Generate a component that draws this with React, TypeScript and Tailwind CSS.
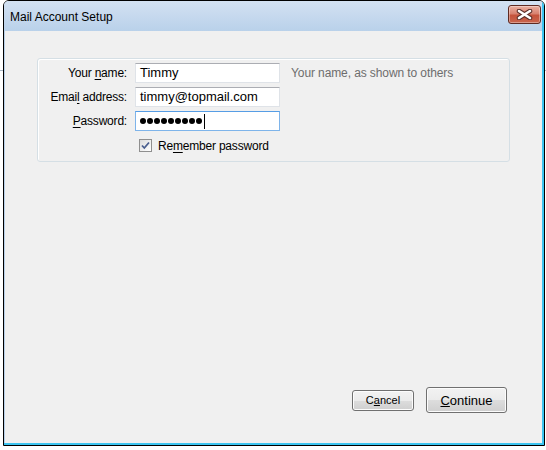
import React from "react";

const font = { fontFamily: '"Liberation Sans", Arial, sans-serif' };

function Field({ children, focused }: { children: React.ReactNode; focused?: boolean }) {
  return (
    <div
      className={
        "h-[20px] w-[145px] flex items-center pl-[4px] bg-white border text-[13px] text-black " +
        (focused
          ? "border-[#7eb4ea] border-t-[#569de5]"
          : "border-[#dfe3e8] border-t-[#abadb3]")
      }
    >
      {children}
    </div>
  );
}

function Label({ pre, u, post }: { pre: string; u: string; post: string }) {
  return (
    <div className="text-right text-[12px] tracking-[-0.2px] text-black leading-none">
      {pre}
      <span className="underline underline-offset-2">{u}</span>
      {post}
    </div>
  );
}

export default function App() {
  return (
    <div className="w-[546px] h-[450px] bg-white flex" style={font}>
      <div className="w-[3px] shrink-0">
        <div className="mt-[70px] h-px bg-[#a8b8c8]" />
      </div>
      <div className="w-[542px] h-[446px] border border-black rounded-t-[6px] overflow-hidden shrink-0">
        <div className="h-full flex flex-col border-r-2 border-b-2 border-[#3cc4f0] bg-[#b9d1ea]">
          <div className="h-[30px] flex justify-between bg-gradient-to-b from-[#d3e1f2] to-[#b9d1ea] pl-[6px] pr-px">
            <div className="self-center pt-[1px] text-[12px] text-black">Mail Account Setup</div>
            <div className="mt-[4px] w-[33px] h-[19px] rounded-[3px] border border-[#5e2a22] bg-[linear-gradient(to_bottom,#eab0a2_0%,#d88270_45%,#c5533c_55%,#c9664e_100%)] shadow-[inset_0_0_0_1px_rgba(255,255,255,0.35)] flex items-center justify-center">
              <svg width="17" height="11" viewBox="0 0 17 11">
                <path d="M3 2 L14 9 M14 2 L3 9" stroke="#5a2f2a" strokeWidth="4.5" strokeLinecap="round" />
                <path d="M3 2 L14 9 M14 2 L3 9" stroke="#ffffff" strokeWidth="2.6" strokeLinecap="round" />
              </svg>
            </div>
          </div>
          <div className="flex-1 ml-px flex flex-col bg-[#f0f0f0]">
            <div className="mt-[27px] mx-[32px] h-[104px] border border-[#d5dfe5] rounded-[3px] shadow-[inset_1px_1px_0_#ffffff] pt-[4px]">
              <div className="grid grid-cols-[89px_145px_1fr] gap-x-[8px] gap-y-[4px] items-center">
                <Label pre="Your " u="n" post="ame:" />
                <Field>Timmy</Field>
                <div className="pl-[3px] text-[12px] tracking-[-0.1px] text-[#6d6d6d] leading-none">Your name, as shown to others</div>

                <Label pre="Emai" u="l" post=" address:" />
                <Field>timmy@topmail.com</Field>
                <div />

                <Label pre="" u="P" post="assword:" />
                <Field focused>
                  <div className="flex items-center">
                    {Array.from({ length: 9 }).map((_, i) => (
                      <span key={i} className="w-[6px] h-[6px] rounded-full bg-black mr-px last:mr-0" />
                    ))}
                    <span className="ml-px w-px h-[15px] bg-black" />
                  </div>
                </Field>
                <div />
              </div>
              <div className="mt-[8px] ml-[101px] flex items-center h-[13px]">
                <div className="w-[13px] h-[13px] border border-[#8f8f8f] bg-[linear-gradient(135deg,#dcdcdc,#ffffff)] flex items-center justify-center">
                  <svg width="11" height="11" viewBox="0 0 11 11">
                    <path d="M2 5.5 L4.3 8 L9 2.5" stroke="#4a5f8f" strokeWidth="1.8" fill="none" />
                  </svg>
                </div>
                <div className="ml-[6px] text-[12px] tracking-[-0.2px] text-black leading-none">
                  Re<span className="underline underline-offset-2">m</span>ember password
                </div>
              </div>
            </div>
            <div className="flex-1" />
            <div className="flex justify-end items-center gap-[12px] pr-[35px] pb-[30px]">
              <button className="w-[62px] h-[21px] rounded-[3px] border border-[#707070] bg-[linear-gradient(to_bottom,#f2f2f2_0%,#ebebeb_50%,#dddddd_50%,#cfcfcf_100%)] shadow-[inset_0_0_0_1px_#fcfcfc] text-[11px] text-black leading-none">
                C<span className="underline">a</span>ncel
              </button>
              <button className="w-[81px] h-[26px] rounded-[3px] border border-[#707070] bg-[linear-gradient(to_bottom,#f2f2f2_0%,#ebebeb_50%,#dddddd_50%,#cfcfcf_100%)] shadow-[inset_0_0_0_1px_#fcfcfc] text-[13px] text-black leading-none">
                <span className="underline">C</span>ontinue
              </button>
            </div>
          </div>
        </div>
      </div>
      <div className="flex-1">
        <div className="mt-[70px] h-px bg-[#a8b8c8]" />
      </div>
    </div>
  );
}
